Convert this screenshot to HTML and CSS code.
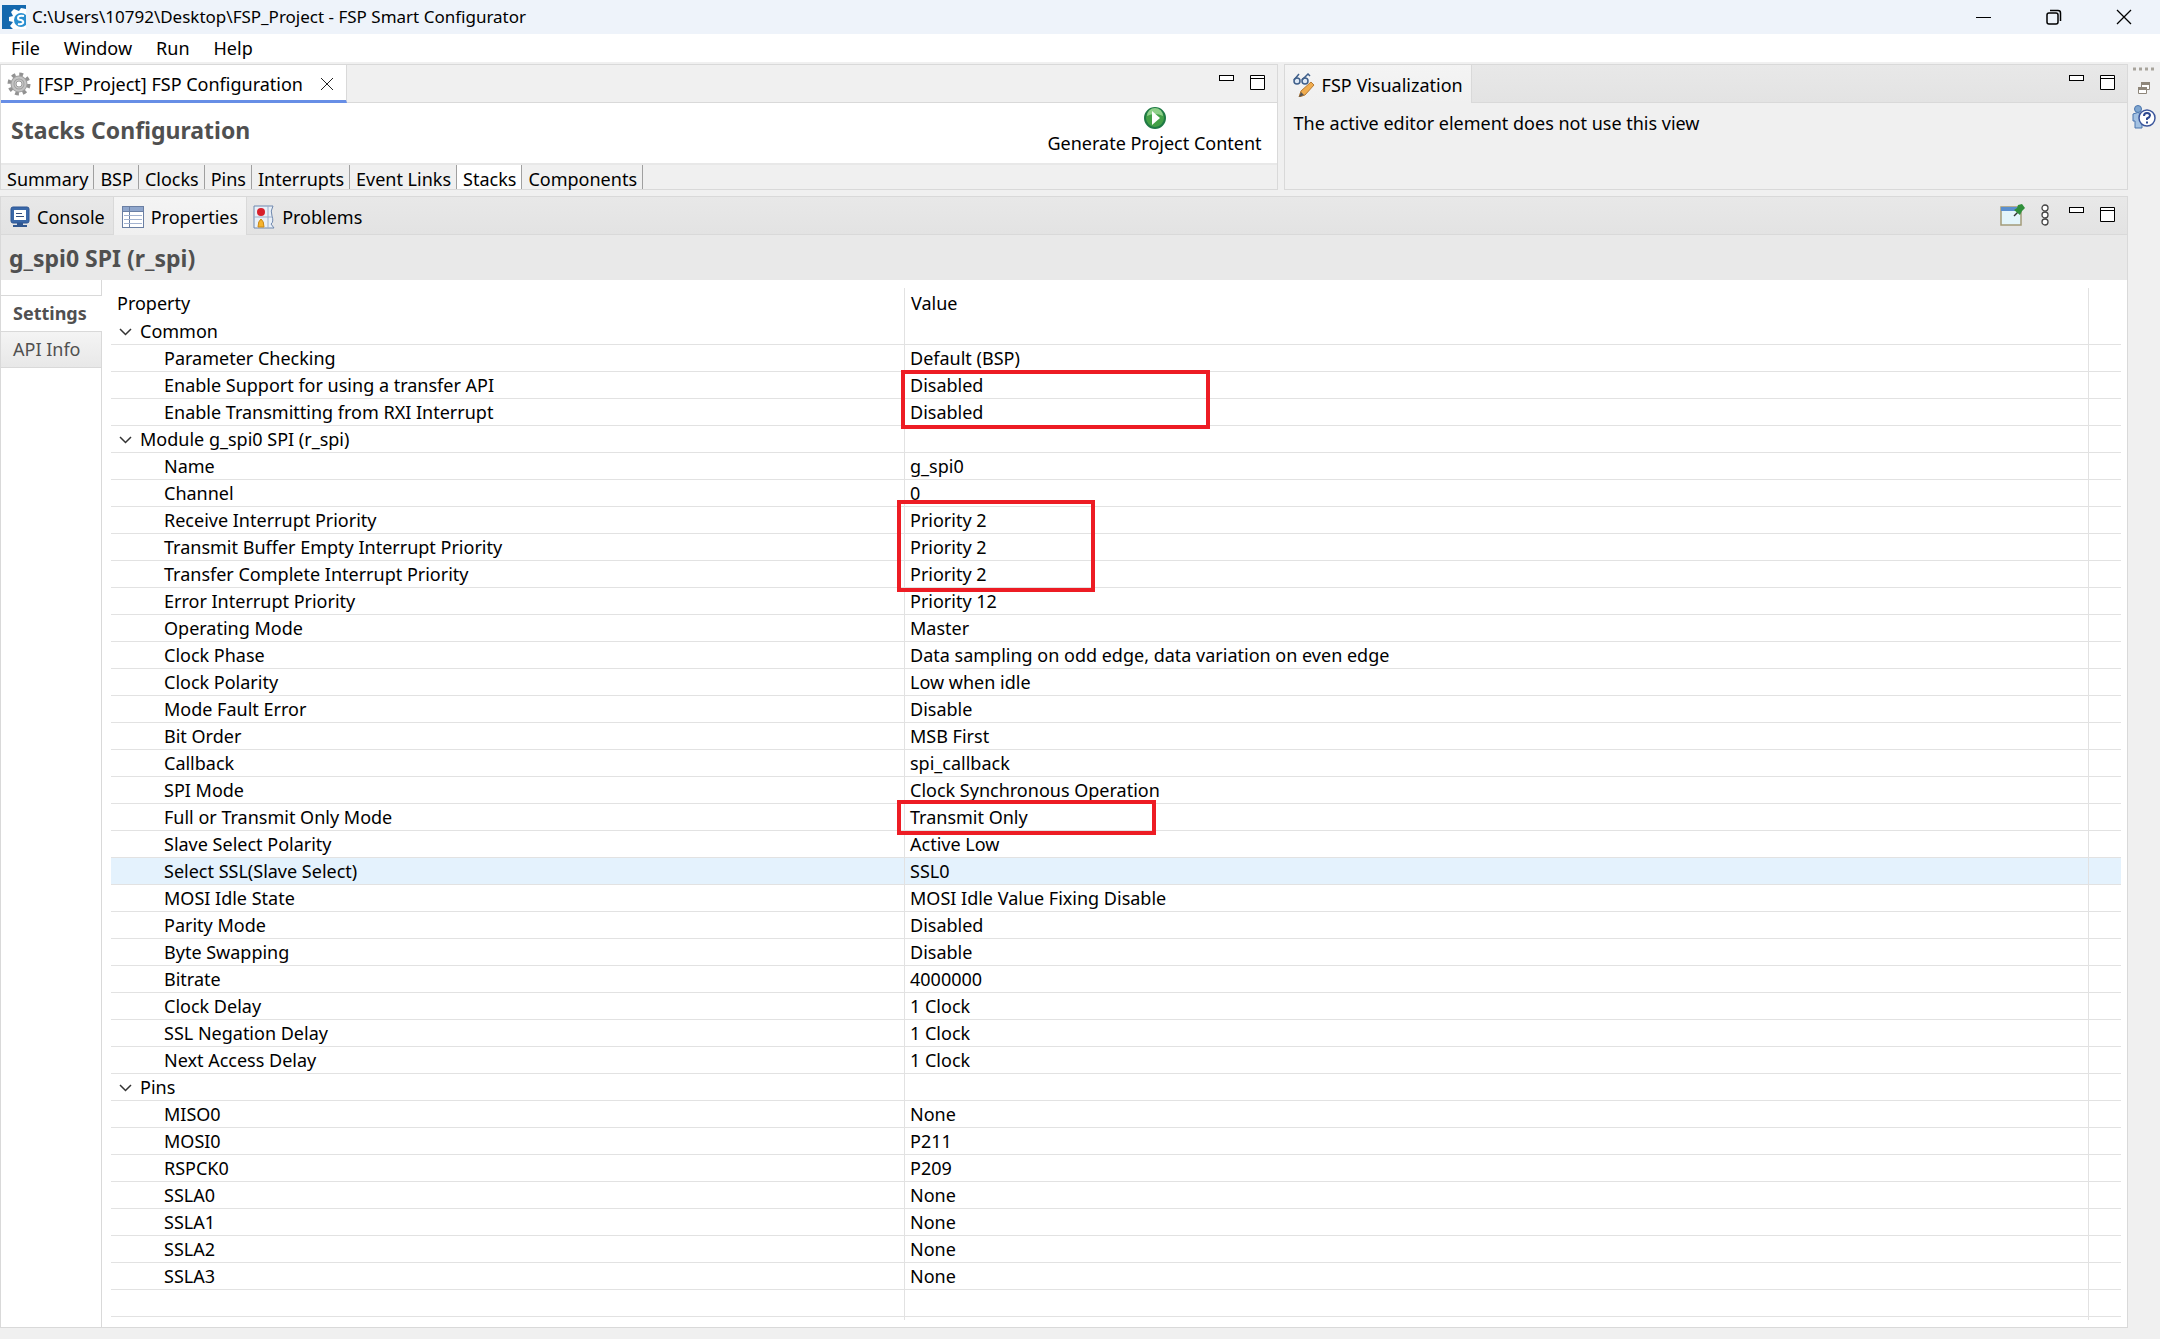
FILE: index.html
```html
<!DOCTYPE html>
<html lang="en">
  <head>
    <meta charset="UTF-8" />
    <meta name="viewport" content="width=device-width, initial-scale=1.0" />
    <title>FSP Smart Configurator</title>
    <link rel="stylesheet" href="styles.css">
  </head>
  <body>
    <header class="titlebar">
      <svg class="app-icon" width="24" height="24" viewBox="0 0 24 24">
        <rect width="24" height="24" fill="#1468ae" />
        <path d="M24 4 L19 3 L17 6 L12 4 L9 7 L11 11 L7 12 L7 16 L11 17 L8 21 L11 24 L24 24 Z" fill="#fff" />
        <circle cx="19" cy="15" r="7" fill="#2a8fd0" />
        <path d="M22 11 Q16 10 16 13 Q16 15 19 15 Q22 16 21 18 Q19 20 16 19" fill="none" stroke="#fff" stroke-width="2" />
      </svg>
      <span class="window-title">C:\Users\10792\Desktop\FSP_Project - FSP Smart Configurator</span>
      <div class="window-buttons">
        <button aria-label="Minimize"><svg width="16" height="16"><path d="M0 8.5H15" stroke="#000" /></svg></button>
        <button aria-label="Restore"><svg width="16" height="16" fill="none" stroke="#000" stroke-width="1.5"><rect x="1" y="4" width="11" height="11" rx="2" /><path d="M4 1.5H12Q14.500 1.500 14.500 4V12" /></svg></button>
        <button aria-label="Close"><svg width="16" height="16"><path d="M1 1L15 15M15 1L1 15" stroke="#000" stroke-width="1.3" /></svg></button>
      </div>
    </header>
    <nav class="menubar">
      <button>File</button>
      <button>Window</button>
      <button>Run</button>
      <button>Help</button>
    </nav>

    <div class="workbench">
      <main class="parts">
        <div class="top-parts">
          <!-- editor -->
          <section class="part editor">
            <div class="tabs">
              <button class="tab active">
                <svg width="24" height="24" viewBox="0 0 24 24">
                  <circle cx="12" cy="12" r="9.500" fill="none" stroke="#929292" stroke-width="4" stroke-dasharray="3.730 3.730" />
                  <circle cx="12" cy="12" r="6.500" fill="#c8c8c8" stroke="#a0a0a0" stroke-width="4" />
                  <circle cx="12" cy="12" r="6.500" fill="none" stroke="#c4c4c4" stroke-width="2" />
                  <circle cx="12" cy="12" r="3" fill="#fff" stroke="#999" />
                </svg>
                <span>[FSP_Project] FSP Configuration</span>
                <svg class="close" width="14" height="14"><path d="M1 1L13 13M13 1L1 13" stroke="#222" /></svg>
              </button>
              <div class="tools">
                <button aria-label="Minimize"><svg width="15" height="15"><rect x=".5" y=".5" width="14" height="5" fill="#fff" stroke="#000" /></svg></button>
                <button aria-label="Maximize"><svg width="15" height="15"><path d="M.5 .5H14.500V14.500H.5ZM.5 3.500H14.500" fill="#fff" stroke="#000" /></svg></button>
              </div>
            </div>
            <div class="form-head">
              <h1>Stacks Configuration</h1>
              <button class="generate">
                <svg width="22" height="22" viewBox="0 0 22 22">
                  <circle cx="11" cy="11" r="10" fill="#43a047" stroke="#1f7a45" stroke-width="2" />
                  <path d="M3 9A8 8 0 0 1 19 9Q11 5 3 9" fill="#8fd08a" />
                  <path d="M8 4L16 11L8 18Z" fill="#fff" />
                </svg>
                <span>Generate Project Content</span>
              </button>
            </div>
            <div class="pages">
              <button>Summary</button>
              <button>BSP</button>
              <button>Clocks</button>
              <button>Pins</button>
              <button>Interrupts</button>
              <button>Event Links</button>
              <button class="current">Stacks</button>
              <button>Components</button>
            </div>
          </section>

          <section class="part visual">
            <div class="tabs grey">
              <button class="tab active">
                <svg width="22" height="24" viewBox="0 0 22 24">
                  <g fill="#dfe9f5" stroke="#3f5f8a" stroke-width="1.500"><circle cx="4" cy="8" r="3" /><circle cx="12" cy="8" r="3" /><path d="M1 7L6 1M9 7L15 1L17 3" fill="none" /></g>
                  <path d="M18 9L21 12L12 22L6 24L8 18Z" fill="#f0ac4e" stroke="#b57a35" />
                  <path d="M8 19L11 22L6 24Z" fill="#555" />
                </svg>
                <span>FSP Visualization</span>
              </button>
              <div class="tools">
                <button aria-label="Minimize"><svg width="15" height="15"><rect x=".5" y=".5" width="14" height="5" fill="#fff" stroke="#000" /></svg></button>
                <button aria-label="Maximize"><svg width="15" height="15"><path d="M.5 .5H14.500V14.500H.5ZM.5 3.500H14.500" fill="#fff" stroke="#000" /></svg></button>
              </div>
            </div>
            <p class="hint">The active editor element does not use this view</p>
          </section>
        </div>

        <!-- properties view -->
        <section class="part properties">
          <div class="tabs grey">
            <button class="tab">
              <svg width="20" height="22" viewBox="0 0 20 22">
                <rect x="1" y="1" width="18" height="16" rx="2" fill="#3a68a8" stroke="#2c5593" />
                <rect x="4" y="4" width="12" height="10" fill="#fff" />
                <path d="M6 7.500H12M6 10.500H14" stroke="#35507f" />
                <path d="M7 17H13V19H17V21H3V19H7Z" fill="#2f568f" />
              </svg>
              <span>Console</span>
            </button>
            <button class="tab active">
              <svg width="22" height="22" viewBox="0 0 22 22">
                <rect x=".5" y=".5" width="21" height="21" fill="#fff" stroke="#6a7fa3" />
                <rect x="1" y="1" width="20" height="4" fill="#8fa6cc" />
                <path d="M7.500 1V21M1 5.500H21" stroke="#6a7fa3" />
                <path d="M2 9.500H20M2 13.500H20M2 17.500H20" stroke="#a3b3d0" />
              </svg>
              <span>Properties</span>
            </button>
            <button class="tab last">
              <svg width="22" height="24" viewBox="0 0 22 24">
                <path d="M1 1H20Q17 6 19 11Q21 17 18 19L21 23H1Z" fill="#e9f0f8" stroke="#6f88ae" />
                <path d="M1 12H19M15 1V23" stroke="#9db0cc" />
                <circle cx="8" cy="7" r="4" fill="#d8202c" />
                <path d="M8 14Q11 16 11 22H5Q5 16 8 14Z" fill="#f5b32e" stroke="#c98818" />
              </svg>
              <span>Problems</span>
            </button>
            <div class="tools">
              <button class="pin" aria-label="Pin">
                <svg width="25" height="22" viewBox="0 0 25 22">
                  <rect x="1" y="3" width="20" height="18" fill="#e3f5fb" stroke="#a39a78" stroke-width="1.500" />
                  <rect x="1" y="3" width="19" height="4" fill="#5b8fce" />
                  <path d="M14 12L18 8" stroke="#333" stroke-width="1.500" />
                  <path d="M14 6L17 4L18 1L22 0L25 4L22 7L20 11Z" fill="#2f8f3a" />
                </svg>
              </button>
              <button class="more" aria-label="View menu">
                <svg width="8" height="22" fill="#fff" stroke="#444" stroke-width="1.300"><circle cx="4" cy="4" r="3" /><circle cx="4" cy="11" r="3" /><circle cx="4" cy="18" r="3" /></svg>
              </button>
              <button aria-label="Minimize"><svg width="15" height="15"><rect x=".5" y=".5" width="14" height="5" fill="#fff" stroke="#000" /></svg></button>
              <button aria-label="Maximize"><svg width="15" height="15"><path d="M.5 .5H14.500V14.500H.5ZM.5 3.500H14.500" fill="#fff" stroke="#000" /></svg></button>
            </div>
          </div>
          <h2>g_spi0 SPI (r_spi)</h2>
          <div class="sheet">
            <div class="side">
              <div class="side-top"></div>
              <button class="side-tab selected">Settings</button>
              <button class="side-tab">API Info</button>
              <div class="side-rest"></div>
            </div>
            <div class="tree">
              <table>
                <colgroup><col class="c-name"><col class="c-value"><col class="c-rest"></colgroup>
                <thead><tr><th>Property</th><th>Value</th><th></th></tr></thead>
                <tbody>
                  <tr class="group"><td><svg width="13" height="8"><path d="M1 1L6.500 6.500L12 1" /></svg>Common</td><td></td><td></td></tr>
                  <tr><td>Parameter Checking</td><td>Default (BSP)</td><td></td></tr>
                  <tr><td>Enable Support for using a transfer API</td><td>Disabled</td><td></td></tr>
                  <tr><td>Enable Transmitting from RXI Interrupt</td><td>Disabled</td><td></td></tr>
                  <tr class="group"><td><svg width="13" height="8"><path d="M1 1L6.500 6.500L12 1" /></svg>Module g_spi0 SPI (r_spi)</td><td></td><td></td></tr>
                  <tr><td>Name</td><td>g_spi0</td><td></td></tr>
                  <tr><td>Channel</td><td>0</td><td></td></tr>
                  <tr><td>Receive Interrupt Priority</td><td>Priority 2</td><td></td></tr>
                  <tr><td>Transmit Buffer Empty Interrupt Priority</td><td>Priority 2</td><td></td></tr>
                  <tr><td>Transfer Complete Interrupt Priority</td><td>Priority 2</td><td></td></tr>
                  <tr><td>Error Interrupt Priority</td><td>Priority 12</td><td></td></tr>
                  <tr><td>Operating Mode</td><td>Master</td><td></td></tr>
                  <tr><td>Clock Phase</td><td>Data sampling on odd edge, data variation on even edge</td><td></td></tr>
                  <tr><td>Clock Polarity</td><td>Low when idle</td><td></td></tr>
                  <tr><td>Mode Fault Error</td><td>Disable</td><td></td></tr>
                  <tr><td>Bit Order</td><td>MSB First</td><td></td></tr>
                  <tr><td>Callback</td><td>spi_callback</td><td></td></tr>
                  <tr><td>SPI Mode</td><td>Clock Synchronous Operation</td><td></td></tr>
                  <tr><td>Full or Transmit Only Mode</td><td>Transmit Only</td><td></td></tr>
                  <tr><td>Slave Select Polarity</td><td>Active Low</td><td></td></tr>
                  <tr class="hover"><td>Select SSL(Slave Select)</td><td>SSL0</td><td></td></tr>
                  <tr><td>MOSI Idle State</td><td>MOSI Idle Value Fixing Disable</td><td></td></tr>
                  <tr><td>Parity Mode</td><td>Disabled</td><td></td></tr>
                  <tr><td>Byte Swapping</td><td>Disable</td><td></td></tr>
                  <tr><td>Bitrate</td><td>4000000</td><td></td></tr>
                  <tr><td>Clock Delay</td><td>1 Clock</td><td></td></tr>
                  <tr><td>SSL Negation Delay</td><td>1 Clock</td><td></td></tr>
                  <tr><td>Next Access Delay</td><td>1 Clock</td><td></td></tr>
                  <tr class="group"><td><svg width="13" height="8"><path d="M1 1L6.500 6.500L12 1" /></svg>Pins</td><td></td><td></td></tr>
                  <tr><td>MISO0</td><td>None</td><td></td></tr>
                  <tr><td>MOSI0</td><td>P211</td><td></td></tr>
                  <tr><td>RSPCK0</td><td>P209</td><td></td></tr>
                  <tr><td>SSLA0</td><td>None</td><td></td></tr>
                  <tr><td>SSLA1</td><td>None</td><td></td></tr>
                  <tr><td>SSLA2</td><td>None</td><td></td></tr>
                  <tr><td>SSLA3</td><td>None</td><td></td></tr>
                  <tr><td></td><td></td><td></td></tr>
                  <tr class="tail"><td></td><td></td><td></td></tr>
                </tbody>
              </table>
              <div class="mark mark-transfer"></div>
              <div class="mark mark-priority"></div>
              <div class="mark mark-mode"></div>
            </div>
          </div>
        </section>
      </main>

      <aside class="trim">
        <svg width="22" height="4"><path d="M0 2H22" stroke="#a8a49c" stroke-width="3" stroke-dasharray="3 3" /></svg>
        <button aria-label="Restore"><svg width="12" height="12" fill="#fff" stroke="#8e867a"><path d="M3.500 1V7.500H11.500V1Z" /><path d="M3 1.500H12" stroke-width="3" /><path d="M.5 6V11.500H8.500V6Z" /><path d="M0 6.500H9" stroke-width="3" /></svg></button>
        <button aria-label="Help">
          <svg width="24" height="24" viewBox="0 0 24 24">
            <circle cx="6" cy="4" r="3.500" fill="#7fa6d0" stroke="#4a75ad" />
            <path d="M1 9Q6 6 10 9V23H3V16H1Z" fill="#a4c2e2" stroke="#4a75ad" />
            <circle cx="15" cy="13" r="8" fill="#fff" stroke="#3a559c" stroke-width="1.500" />
            <path d="M12 11Q12 8 15 8Q18 8 18 10.500Q18 12 15 13.500V15M15 16.500V18.500" fill="none" stroke="#2d4790" stroke-width="2" />
          </svg>
        </button>
      </aside>
    </div>
  </body>
</html>
```
FILE: styles.css
```css
* {
  box-sizing: border-box;
}
body {
  margin: 0;
  min-height: 100vh;
  display: flex;
  flex-direction: column;
  background-color: #f0f0f0;
  color: #000;
  font-family: "Noto Sans", "Open Sans", sans-serif;
  font-size: 18px;
  line-height: 24px;
  white-space: nowrap;
}
button {
  margin: 0;
  padding: 0;
  border: none;
  background: none;
  color: inherit;
  font: inherit;
}
svg {
  display: block;
  flex: none;
}
h1,
h2,
p {
  margin: 0;
}
h1,
h2 {
  font-size: 23px;
  line-height: 30px;
  color: #505050;
}

/* window frame */
.titlebar {
  display: flex;
  align-items: center;
  height: 34px;
  padding: 0 28px 0 2px;
  background-color: #eef3fa;
}
.window-title {
  margin-left: 6px;
  font-size: 17px;
}
.window-buttons {
  display: flex;
  gap: 54px;
  margin-left: auto;
}
.menubar {
  display: flex;
  gap: 24px;
  height: 28px;
  padding: 0 11px;
  background-color: #fff;
}
.workbench {
  flex: 1;
  display: flex;
  padding: 2px 0 11px;
}
.parts {
  flex: 1;
  display: flex;
  flex-direction: column;
  gap: 6px;
}
.top-parts {
  display: flex;
  gap: 6px;
  height: 126px;
}
.part {
  border: 1px solid #d9d9d9;
}
.editor {
  flex: 53 1 0;
}
.visual {
  flex: 35 1 0;
}

/* tab folders */
.tabs {
  display: flex;
  height: 38px;
  border-bottom: 1px solid #d9d9d9;
}
.tabs.grey {
  background: linear-gradient(#e8e8e8, #e3e3e3);
}
.tab {
  display: flex;
  align-items: center;
  gap: 7px;
  padding: 2px 8px 0 9px;
  border-right: 1px solid #d9d9d9;
}
.tab.last {
  padding-left: 6px;
  border-right: none;
}
.grey .active {
  height: 38px;
  padding-left: 8px;
  background: linear-gradient(#f4f4f4, #f0f0f0);
}
.editor .tab {
  height: 38px;
  padding: 3px 12px 0 6px;
  background-color: #fff;
  border-bottom: 3px solid #678ee6;
}
.close {
  margin-left: 10px;
}
.tools {
  display: flex;
  gap: 16px;
  margin-left: auto;
  padding: 10px 12px 0 0;
}
.tools button {
  height: 15px;
}
.tools .pin,
.tools .more {
  height: 22px;
  margin-top: -3px;
}
.tools .more {
  margin-right: 4px;
}

/* editor */
.form-head {
  display: flex;
  justify-content: space-between;
  height: 62px;
  padding: 0 15px 0 10px;
  background-color: #fff;
  border-bottom: 2px solid #e8e8e8;
}
.form-head h1 {
  padding-top: 12px;
}
.generate {
  display: flex;
  flex-direction: column;
  align-items: center;
  gap: 2px;
  padding-top: 4px;
}
.pages {
  display: flex;
  height: 24px;
}
.pages button {
  padding: 2px 5px 0 6px;
  border-right: 1px solid #a0a0a0;
}
.pages .current {
  background-color: #fff;
}
.hint {
  padding: 8px 9px;
}

/* properties */
.properties {
  flex: 1;
  display: flex;
  flex-direction: column;
}
.properties h2 {
  height: 45px;
  padding: 8px;
  background-color: #e9e9e9;
}
.sheet {
  flex: 1;
  display: flex;
  background-color: #fff;
}
.side {
  display: flex;
  flex-direction: column;
  width: 101px;
  color: #505050;
}
.side-top {
  height: 15px;
  border-right: 1px solid #d9d9d9;
}
.side-tab {
  height: 36px;
  padding: 0 0 2px 12px;
  text-align: left;
  background: linear-gradient(#f4f4f4, #e8e8e8);
  border-right: 1px solid #d9d9d9;
  border-bottom: 1px solid #d9d9d9;
}
.side-tab.selected {
  height: 37px;
  font-weight: bold;
  background: #fff;
  border-top: 1px solid #d9d9d9;
  border-right: none;
}
.side-rest {
  flex: 1;
  border-right: 1px solid #d9d9d9;
}
.tree {
  position: relative;
  flex: 1;
  padding: 8px 6px 0 9px;
}
table {
  width: 100%;
  table-layout: fixed;
  border-collapse: separate;
  border-spacing: 0;
}
.c-name {
  width: 794px;
}
.c-rest {
  width: 32px;
}
th {
  height: 30px;
  padding: 0 6px;
  font-weight: normal;
  text-align: left;
}
td {
  height: 27px;
  padding: 0 5px;
  line-height: 26px;
  border-bottom: 1px solid #e2e2e2;
}
td:not(:last-child),
th:not(:last-child) {
  border-right: 1px solid #e2e2e2;
}
td:first-child {
  padding-left: 53px;
}
.group td:first-child {
  padding-left: 8px;
}
.group svg {
  display: inline-block;
  margin-right: 8px;
  vertical-align: 2px;
  fill: none;
  stroke: #333;
  stroke-width: 1.5;
}
.hover td {
  background-color: #e4f2fd;
}
.tail td {
  height: 3px;
  border-bottom: none;
}

/* review marks drawn over the tree */
.mark {
  position: absolute;
  border: 4px solid #ed1c24;
}
.mark-transfer {
  left: 799px;
  top: 90px;
  width: 309px;
  height: 59px;
}
.mark-priority {
  left: 795px;
  top: 220px;
  width: 198px;
  height: 92px;
}
.mark-mode {
  left: 795px;
  top: 520px;
  width: 259px;
  height: 35px;
}

.trim {
  display: flex;
  flex-direction: column;
  align-items: center;
  gap: 11px;
  width: 32px;
  padding-top: 3px;
}
```
